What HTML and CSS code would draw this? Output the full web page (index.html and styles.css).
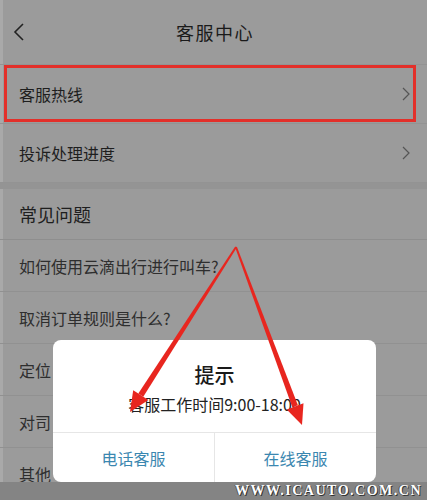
FILE: index.html
```html
<!DOCTYPE html>
<html lang="zh-CN">

<head>
  <meta charset="UTF-8" />
  <meta name="viewport" content="width=device-width, initial-scale=1.0" />
  <title>客服中心</title>
  <link rel="stylesheet" href="styles.css">
</head>

<body>

  <div class="screen">

    <div class="header">
      <svg class="back" width="12" height="18" viewBox="0 0 12 18">
        <path d="M10 1 L2 9 L10 17" fill="none" stroke="#222" stroke-width="1.6" />
      </svg>
      <div class="title">客服中心</div>
    </div>

    <div class="menu">
      <div class="row marked">
        <span>客服热线</span>
        <svg class="arrow" width="8" height="14" viewBox="0 0 8 14">
          <path d="M1 1 L7 7 L1 13" fill="none" stroke="#555" stroke-width="1.2" />
        </svg>
      </div>
      <div class="row">
        <span>投诉处理进度</span>
        <svg class="arrow" width="8" height="14" viewBox="0 0 8 14">
          <path d="M1 1 L7 7 L1 13" fill="none" stroke="#555" stroke-width="1.2" />
        </svg>
      </div>
    </div>

    <div class="faq">
      <div class="faq-title">常见问题</div>
      <div class="faq-item">如何使用云滴出行进行叫车?</div>
      <div class="faq-item">取消订单规则是什么?</div>
      <div class="faq-item">定位</div>
      <div class="faq-item">对司</div>
      <div class="faq-item">其他</div>
    </div>

    <div class="footer">
      <span class="watermark">WWW.ICAUTO.COM.CN</span>
    </div>

    <div class="dialog">
      <div class="dialog-title">提示</div>
      <div class="dialog-text">客服工作时间9:00-18:00</div>
      <div class="dialog-buttons">
        <button class="dialog-btn">电话客服</button>
        <button class="dialog-btn">在线客服</button>
      </div>
    </div>

    <svg class="marks" width="427" height="500" viewBox="0 0 427 500">
      <polygon points="236.8,247.5 235.2,246.5 138.3,393.6 143.3,396.8" fill="#e8261f" />
      <polygon points="130,412 148.4,400.1 133.2,390.3" fill="#e8261f" />
      <polygon points="236.9,246.7 235.1,247.3 292.3,407.3 297.9,405.3" fill="#e8261f" />
      <polygon points="302,425 303.5,403.2 286.7,409.4" fill="#e8261f" />
    </svg>

  </div>

</body>

</html>
```

FILE: styles.css
```css
body {
  margin: 0;
  background-color: #9a9a9a;
  font-family: "Noto Sans CJK SC", "Noto Sans", sans-serif;
  color: #1e1e1e;
}

.screen {
  position: relative;
  width: 427px;
  height: 500px;
  overflow: hidden;
  background-color: #9b9b9b;
  box-shadow: inset 3px 0 0 #a9a9a9;
}

.header {
  height: 64px;
  display: flex;
  align-items: center;
  justify-content: center;
  position: relative;
  border-bottom: 1px solid #939393;
}

.back {
  position: absolute;
  left: 13px;
  top: 23px;
}

.title {
  font-size: 18px;
  letter-spacing: 1.5px;
  padding-left: 3px;
  color: #1a1a1a;
}

.row {
  position: relative;
  height: 58px;
  display: flex;
  align-items: center;
  justify-content: space-between;
  padding: 0 17px 0 19px;
  font-size: 16px;
  border-bottom: 1px solid #939393;
}

.row.marked::after {
  content: "";
  position: absolute;
  left: 4px;
  right: 11px;
  top: 0;
  bottom: 1px;
  border: 3px solid #e3302a;
}

.menu {
  border-bottom: 6px solid #949494;
}

.faq-title {
  height: 50px;
  display: flex;
  align-items: center;
  padding-left: 19px;
  font-size: 18px;
  border-bottom: 1px solid #8e8e8e;
}

.faq-item {
  height: 51px;
  display: flex;
  align-items: center;
  padding-left: 19px;
  font-size: 16px;
  color: #2e2e2e;
  border-bottom: 1px solid #919191;
}

.footer {
  position: absolute;
  left: 0;
  right: 0;
  bottom: 0;
  height: 18px;
  background-color: #848484;
  display: flex;
  align-items: center;
  justify-content: flex-end;
  padding-right: 5px;
}

.watermark {
  font-family: "Liberation Serif", serif;
  font-weight: bold;
  font-size: 14px;
  letter-spacing: 1.5px;
  color: #fff;
  text-shadow: 1px 1px 0 #333, -1px 0 0 #555;
}

.dialog {
  position: absolute;
  left: 53px;
  top: 340px;
  width: 323px;
  height: 142px;
  background-color: #fff;
  border-radius: 8px;
  display: flex;
  flex-direction: column;
  align-items: center;
}

.dialog-title {
  margin-top: 22px;
  font-size: 20px;
  line-height: 26px;
  font-weight: 500;
  color: #1a1a1a;
}

.dialog-text {
  margin-top: 5px;
  font-size: 16px;
  line-height: 22px;
  color: #222;
}

.dialog-buttons {
  margin-top: auto;
  width: 100%;
  height: 49px;
  display: flex;
  border-top: 1px solid #e6e6e6;
}

.dialog-btn {
  flex: 1;
  border: none;
  background: none;
  font-family: inherit;
  font-size: 16px;
  color: #3b87b0;
  padding: 0;
}

.dialog-btn + .dialog-btn {
  border-left: 1px solid #e6e6e6;
}

.marks {
  position: absolute;
  left: 0;
  top: 0;
  pointer-events: none;
}
```
